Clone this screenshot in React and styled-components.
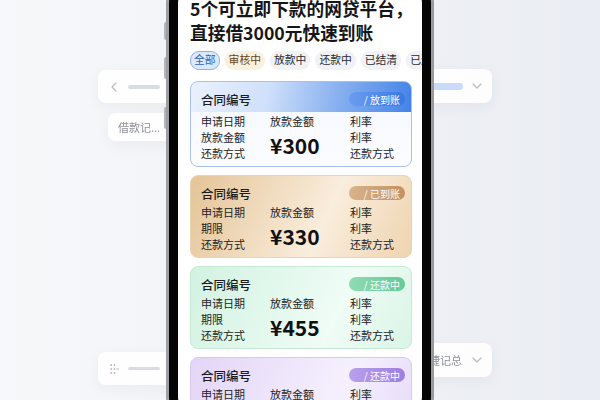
import styled, { createGlobalStyle } from 'styled-components';

const GlobalStyle = createGlobalStyle`
	html, body {
		margin: 0;
		padding: 0;
	}

	body {
		font-family: "Noto Sans CJK SC", "Noto Sans", sans-serif;
		color: #1c1c1e;
	}
`;

const tabs = [
	{ label: '全部', kind: 'active' },
	{ label: '审核中', kind: 'warm' },
	{ label: '放款中' },
	{ label: '还款中' },
	{ label: '已结清' },
	{ label: '已逾期' },
];

const loans = [
	{
		status: '放到账',
		amount: '¥300',
		second: '放款金额',
		tall: true,
		border: '#a7c1ec',
		bg: 'linear-gradient(100deg, #eaf1fd 0%, #cfe0fa 35%, #8bb2f0 65%, #4383e8 100%) top / 100% 30px no-repeat, linear-gradient(180deg, #f4f8fe, #fbfcff)',
		badge: 'linear-gradient(90deg, #6a9df0, #3a78e3)',
	},
	{
		status: '已到账',
		amount: '¥330',
		second: '期限',
		border: '#ebd3b0',
		bg: 'linear-gradient(115deg, #e4c497 0%, #f4e3cb 45%, #f9eddc 60%, #efd4b0 100%)',
		badge: 'linear-gradient(90deg, #d9b389, #c29162)',
	},
	{
		status: '还款中',
		amount: '¥455',
		second: '期限',
		border: '#c6ead6',
		bg: 'linear-gradient(115deg, #d2f2e1 0%, #e8faf1 50%, #f0fcf6 65%, #d9f5e6 100%)',
		badge: 'linear-gradient(90deg, #8fdcb2, #65c996)',
	},
	{
		status: '还款中',
		amount: '¥520',
		second: '期限',
		border: '#d9c9f1',
		bg: 'linear-gradient(115deg, #e3d5f7 0%, #f1eafc 50%, #f5f0fd 65%, #e6daf9 100%)',
		badge: 'linear-gradient(90deg, #b9a0ec, #9c7fe0)',
	},
];

const Stage = styled.div`
	width: 600px;
	height: 400px;
	overflow: hidden;
	display: flex;
	background: linear-gradient(90deg, #f7f8fa 0%, #f0f2f6 50%, #eaedf3 100%);
`;

const Side = styled.div`
	flex: 1;
	display: flex;
	flex-direction: column;
	align-items: ${(p) => (p.$left ? 'flex-end' : 'flex-start')};
	padding: ${(p) => (p.$left ? '70px 0 15px' : '69px 0 23px')};
`;

const Spacer = styled.div`
	flex: 1;
`;

const GhostCard = styled.div`
	display: flex;
	align-items: center;
	gap: 9px;
	height: ${(p) => p.$h || 33}px;
	width: ${(p) => p.$w || 92}px;
	margin: ${(p) => p.$m || 0};
	padding: 0 10px 0 ${(p) => p.$pl ?? 13}px;
	box-sizing: border-box;
	border-radius: 8px;
	background: rgba(255, 255, 255, 0.88);
	box-shadow: 0 4px 14px rgba(40, 50, 80, 0.05);
	filter: blur(0.4px);

	& > svg {
		flex: none;
	}
`;

const GhostBar = styled.div`
	flex: ${(p) => (p.$grow ? 1 : 'none')};
	width: ${(p) => p.$w || 32}px;
	height: ${(p) => p.$h || 4}px;
	border-radius: 4px;
	background: ${(p) => p.$color || '#d9dce2'};
`;

const GhostText = styled.span`
	flex: 1;
	font-size: 11px;
	color: #8d9096;
	white-space: nowrap;
`;

const Phone = styled.div`
	position: relative;
	z-index: 1;
	flex: none;
	width: 268px;
	height: 480px;
	margin-top: -40px;
	padding: 3px;
	box-sizing: border-box;
	border-radius: 44px;
	background: linear-gradient(90deg, #9c9ea2, #c9cbce 30%, #c9cbce 70%, #96989c);
`;

const SideKey = styled.div`
	position: absolute;
	left: -2px;
	top: ${(p) => p.$top}px;
	width: 2px;
	height: ${(p) => p.$h}px;
	border-radius: 2px 0 0 2px;
	background: #b3b5b9;
`;

const Bezel = styled.div`
	height: 100%;
	padding: 9px;
	box-sizing: border-box;
	border-radius: 41px;
	background: #050505;
`;

const Screen = styled.div`
	height: 100%;
	overflow: hidden;
	border-radius: 32px;
	background: #ffffff;
	padding: 24px 10px 0 12px;
	box-sizing: border-box;
`;

const TitleRow = styled.div`
	display: flex;
	align-items: center;
	justify-content: space-between;
`;

const Title = styled.h1`
	margin: 0;
	font-size: 17.7px;
	line-height: 24px;
	font-weight: 600;
	color: #161618;
	white-space: nowrap;
`;

const Tabs = styled.div`
	display: flex;
	gap: 5px;
	margin: 7px 0 11px;
`;

const Tab = styled.span`
	flex: none;
	height: 17px;
	line-height: 15px;
	padding: 0 3px;
	border-radius: 9px;
	font-size: 10.8px;
	white-space: nowrap;
	border: 1px solid ${(p) => (p.$kind === 'active' ? '#8eb0ea' : 'transparent')};
	background: ${(p) =>
		p.$kind === 'active' ? '#dce8fb' : p.$kind === 'warm' ? '#fbf0db' : '#f1f2f5'};
	color: ${(p) => (p.$kind === 'active' ? '#2f63c6' : p.$kind === 'warm' ? '#5e4526' : '#2a2a2c')};
`;

const CardList = styled.div`
	display: flex;
	flex-direction: column;
	gap: 8px;
`;

const Card = styled.div`
	border-radius: 8px;
	border: 1px solid ${(p) => p.$border};
	background: ${(p) => p.$bg};
	padding: 8px 6px 5px 10px;
`;

const CardHead = styled.div`
	display: flex;
	align-items: center;
	justify-content: space-between;
	height: 18px;
	margin-bottom: ${(p) => (p.$tall ? 5 : 2)}px;
	font-size: 12.5px;
	font-weight: 500;
	color: #1c1c1e;
`;

const Badge = styled.span`
	display: flex;
	align-items: center;
	justify-content: flex-end;
	width: 56px;
	height: 14px;
	padding-right: 5px;
	box-sizing: border-box;
	border-radius: 7px;
	background: ${(p) => p.$bg};
	color: #ffffff;
	font-size: 10px;
	font-weight: 400;
`;

const Fields = styled.div`
	display: grid;
	grid-template-columns: 69px 80px 1fr;
	grid-template-rows: repeat(3, 16px);
	font-size: 11px;
	line-height: 16px;
	color: #222224;
`;

const Amount = styled.div`
	grid-column: 2;
	grid-row: 2 / span 2;
	align-self: center;
	font-size: 21px;
	font-weight: 700;
	line-height: 1;
	color: #111;
`;

const Chevron = ({ dir = 'right', color = '#b9bbc0', size = 10 }) => {
	const points = {
		right: '3,1 7,5 3,9',
		left: '7,1 3,5 7,9',
		down: '1,3 5,7 9,3',
	}[dir];
	return (
		<svg width={size} height={size} viewBox="0 0 10 10" fill="none">
			<polyline points={points} stroke={color} strokeWidth="1.2" strokeLinecap="round" strokeLinejoin="round" />
		</svg>
	);
};

const DotsIcon = () => (
	<svg width="9" height="10" viewBox="0 0 9 10">
		{[1, 5, 9].map((y) => (
			<g key={y} fill="#b4b7bd">
				<circle cx="1.2" cy={y} r="0.9" />
				<circle cx="4.5" cy={y} r="0.9" />
			</g>
		))}
		<rect x="6.5" y="4.5" width="2.5" height="1" fill="#b4b7bd" />
	</svg>
);

const LoanCard = ({ loan }) => (
	<Card $border={loan.border} $bg={loan.bg}>
		<CardHead $tall={loan.tall}>
			<span>合同编号</span>
			<Badge $bg={loan.badge}>/ {loan.status}</Badge>
		</CardHead>
		<Fields>
			<span>申请日期</span>
			<span>放款金额</span>
			<span>利率</span>
			<span>{loan.second}</span>
			<Amount>{loan.amount}</Amount>
			<span>利率</span>
			<span>还款方式</span>
			<span>还款方式</span>
		</Fields>
	</Card>
);

export default function App() {
	return (
		<>
			<GlobalStyle />
			<Stage>
				<Side $left>
					<GhostCard $w={92} $m="0 -24px 0 0" $pl={11}>
						<Chevron dir="left" color="#b8bbc1" />
						<GhostBar $w={32} />
					</GhostCard>
					<GhostCard $w={82} $h={28} $m="10px -24px 0 0" $pl={10}>
						<GhostText>借款记...</GhostText>
					</GhostCard>
					<Spacer />
					<GhostCard $w={92} $m="0 -24px 0 0" $pl={12}>
						<DotsIcon />
						<GhostBar $w={32} $h={3} />
					</GhostCard>
				</Side>

				<Phone>
					<SideKey $top={62} $h={18} />
					<SideKey $top={97} $h={22} />
					<SideKey $top={147} $h={22} />
					<Bezel>
						<Screen>
							<TitleRow>
								<Title>
									5个可立即下款的网贷平台，
									<br />
									直接借3000元快速到账
								</Title>
								<Chevron />
							</TitleRow>
							<Tabs>
								{tabs.map((t) => (
									<Tab key={t.label} $kind={t.kind}>
										{t.label}
									</Tab>
								))}
							</Tabs>
							<CardList>
								{loans.map((loan, i) => (
									<LoanCard key={i} loan={loan} />
								))}
							</CardList>
						</Screen>
					</Bezel>
				</Phone>

				<Side>
					<GhostCard $w={82} $h={34} $m="0 0 0 -24px" $pl={5}>
						<GhostBar $grow $h={7} $color="#c9dbf8" />
						<Chevron dir="down" color="#b8bbc1" />
					</GhostCard>
					<Spacer />
					<GhostCard $w={82} $h={34} $m="0 0 0 -24px" $pl={8}>
						<GhostText>快捷记总</GhostText>
						<Chevron dir="down" color="#b8bbc1" />
					</GhostCard>
				</Side>
			</Stage>
		</>
	);
}
